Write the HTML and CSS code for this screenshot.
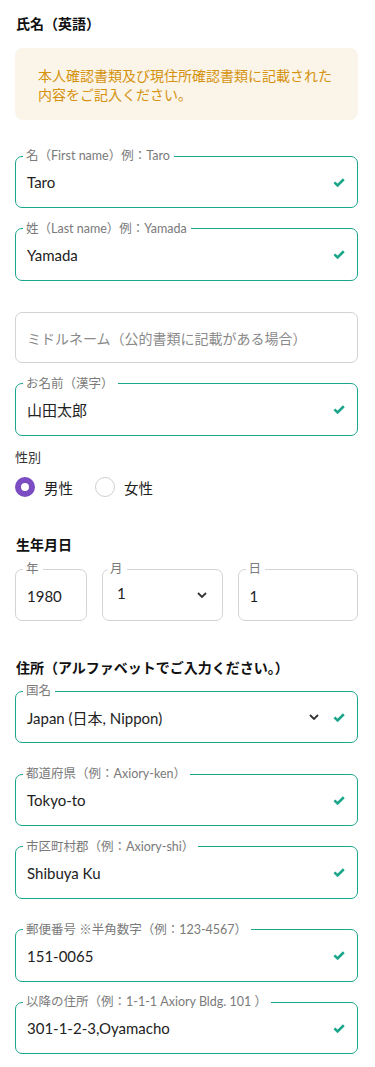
FILE: index.html
```html
<!DOCTYPE html>
<html lang="ja">
<head>
  <meta charset="UTF-8" />
  <meta name="viewport" content="width=device-width, initial-scale=1.0" />
  <title>お客様情報</title>
  <link rel="stylesheet" href="styles.css">
</head>
<body>
  <form class="profile-form">
    <h2 class="section-title">氏名（英語）</h2>
    <div class="notice">本人確認書類及び現住所確認書類に記載された内容をご記入ください。</div>

    <fieldset class="field valid">
      <legend>名（First name）例：Taro</legend>
      <div class="field-row"><span class="value">Taro</span><svg class="check" viewBox="0 0 12 9"><polyline points="1.4,4.4 4.6,7.4 10.8,1.3" /></svg></div>
    </fieldset>
    <fieldset class="field valid">
      <legend>姓（Last name）例：Yamada</legend>
      <div class="field-row"><span class="value">Yamada</span><svg class="check" viewBox="0 0 12 9"><polyline points="1.4,4.4 4.6,7.4 10.8,1.3" /></svg></div>
    </fieldset>

    <div class="field plain">
      <div class="field-row"><span class="placeholder">ミドルネーム（公的書類に記載がある場合）</span></div>
    </div>

    <fieldset class="field valid">
      <legend>お名前（漢字）</legend>
      <div class="field-row"><span class="value">山田太郎</span><svg class="check" viewBox="0 0 12 9"><polyline points="1.4,4.4 4.6,7.4 10.8,1.3" /></svg></div>
    </fieldset>

    <div class="sub-label">性別</div>
    <div class="radio-group">
      <label class="radio"><span class="radio-dot checked"></span>男性</label>
      <label class="radio"><span class="radio-dot"></span>女性</label>
    </div>

    <h2 class="section-title birth-title">生年月日</h2>
    <div class="date-grid">
      <fieldset class="field neutral">
        <legend>年</legend>
        <div class="field-row"><span class="value">1980</span></div>
      </fieldset>
      <fieldset class="field neutral month">
        <legend>月</legend>
        <div class="field-row"><span class="value">1</span><svg class="chevron" viewBox="0 0 10 6"><polyline points="1,1 5,5 9,1" /></svg></div>
      </fieldset>
      <fieldset class="field neutral">
        <legend>日</legend>
        <div class="field-row"><span class="value">1</span></div>
      </fieldset>
    </div>

    <h2 class="section-title address-title">住所（アルファベットでご入力ください。）</h2>
    <fieldset class="field valid gap-after">
      <legend>国名</legend>
      <div class="field-row"><span class="value">Japan (日本, Nippon)</span><svg class="chevron" viewBox="0 0 10 6"><polyline points="1,1 5,5 9,1" /></svg><svg class="check" viewBox="0 0 12 9"><polyline points="1.4,4.4 4.6,7.4 10.8,1.3" /></svg></div>
    </fieldset>
    <fieldset class="field valid">
      <legend>都道府県（例：Axiory-ken）</legend>
      <div class="field-row"><span class="value">Tokyo-to</span><svg class="check" viewBox="0 0 12 9"><polyline points="1.4,4.4 4.6,7.4 10.8,1.3" /></svg></div>
    </fieldset>
    <fieldset class="field valid gap-after">
      <legend>市区町村郡（例：Axiory-shi）</legend>
      <div class="field-row"><span class="value">Shibuya Ku</span><svg class="check" viewBox="0 0 12 9"><polyline points="1.4,4.4 4.6,7.4 10.8,1.3" /></svg></div>
    </fieldset>
    <fieldset class="field valid">
      <legend>郵便番号 ※半角数字（例：123-4567）</legend>
      <div class="field-row"><span class="value">151-0065</span><svg class="check" viewBox="0 0 12 9"><polyline points="1.4,4.4 4.6,7.4 10.8,1.3" /></svg></div>
    </fieldset>
    <fieldset class="field valid">
      <legend>以降の住所（例：1-1-1 Axiory Bldg. 101 ）</legend>
      <div class="field-row"><span class="value">301-1-2-3,Oyamacho</span><svg class="check" viewBox="0 0 12 9"><polyline points="1.4,4.4 4.6,7.4 10.8,1.3" /></svg></div>
    </fieldset>
  </form>
</body>
</html>
```

FILE: styles.css
```css
* { box-sizing: border-box; }
body {
  margin: 0;
  background: #fff;
  color: #222;
  font-family: 'Lato', 'Noto Sans CJK JP', sans-serif;
}
.profile-form {
  padding: 14px 17px 15px 15px;
}
.section-title {
  margin: 0 0 0 1px;
  font-size: 14px;
  line-height: 20px;
  font-weight: 700;
  color: #111;
}
.notice {
  margin: 14px 0 28px;
  padding: 19px 22px 16px 23px;
  background: #fbf4e8;
  border-radius: 8px;
  color: #d4920f;
  font-size: 14px;
  line-height: 18.5px;
}

.field {
  margin: 0 0 12.5px;
  padding: 0 11px 15px;
  min-width: 0;
  border: 1px solid #1ba58a;
  border-radius: 7px;
}
.field legend {
  margin-left: -4px;
  padding: 0 4px 0 3px;
  font-size: 12.5px;
  line-height: 16px;
  color: #7a7a7a;
}
.field-row {
  display: flex;
  align-items: center;
  height: 20px;
  margin-top: 8px;
}
.value {
  flex: 1;
  font-size: 15px;
  color: #222;
}
.check {
  width: 12px;
  height: 9px;
  margin-right: 1px;
  fill: none;
  stroke: #1ba58a;
  stroke-width: 2.6;
}
.chevron {
  width: 10px;
  height: 6px;
  margin-right: 14px;
  fill: none;
  stroke: #333;
  stroke-width: 1.8;
}
.gap-after { margin-bottom: 23px; }

.plain {
  margin-top: 31px;
  margin-bottom: 13px;
  padding: 15px 11px 14px;
  border-color: #d3d3d3;
}
.plain .field-row { margin-top: 0; }
.placeholder {
  font-size: 14px;
  color: #8a8a8a;
}

.sub-label {
  font-size: 13px;
  line-height: 18px;
  color: #333;
}
.radio-group {
  display: flex;
  gap: 22px;
  margin-top: 11px;
}
.radio {
  display: flex;
  align-items: center;
  gap: 9px;
  height: 20px;
  font-size: 14.5px;
  color: #222;
}
.radio-dot {
  width: 20px;
  height: 20px;
  border-radius: 50%;
  border: 1px solid #d0d0d0;
}
.radio-dot.checked {
  border: 6px solid #7b4cc2;
}

.birth-title { margin-top: 38px; }
.date-grid {
  display: grid;
  grid-template-columns: 72px 1fr 1fr;
  gap: 15px;
  margin-top: 6px;
}
.neutral {
  margin: 0;
  padding-bottom: 14px;
  border-color: #d3d3d3;
}
.neutral .field-row { margin-top: 9px; }
.month legend { margin-left: -6px; padding-left: 2px; }
.month .field-row { margin-top: 6px; padding-left: 3px; }
.month .chevron { margin-right: 4px; margin-top: 4px; }

.address-title { margin-top: 37px; margin-bottom: 5px; }
```
